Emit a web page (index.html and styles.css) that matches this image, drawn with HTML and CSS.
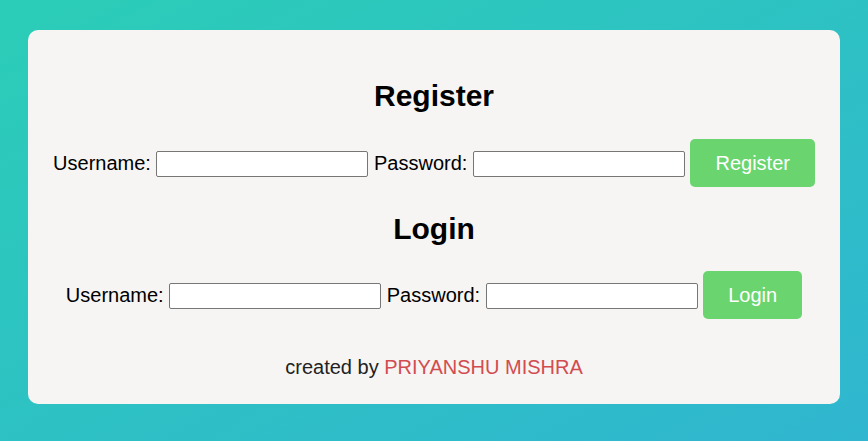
FILE: index.html
```html
<!DOCTYPE html>
<html lang="en">
<head>
<meta charset="utf-8">
<title>Register / Login</title>
<link rel="stylesheet" href="styles.css">
</head>
<body>
<main class="card">
  <h2 class="title">Register</h2>
  <form class="row row-register">
    <label class="label">Username:</label>
    <input class="field" type="text">
    <label class="label">Password:</label>
    <input class="field" type="password">
    <button class="btn btn-register" type="button">Register</button>
  </form>
  <h2 class="title title-login">Login</h2>
  <form class="row row-login">
    <label class="label">Username:</label>
    <input class="field" type="text">
    <label class="label">Password:</label>
    <input class="field" type="password">
    <button class="btn btn-login" type="button">Login</button>
  </form>
  <p class="footer">created by <span class="author">PRIYANSHU MISHRA</span></p>
</main>
</body>
</html>
```

FILE: styles.css
```css
html, body {
  margin: 0;
  height: 100%;
}
body {
  box-sizing: border-box;
  padding: 30px 28px;
  background: linear-gradient(to right bottom, #2bcdb7, #30b6d0);
  font-family: "Liberation Sans", Arial, sans-serif;
  font-size: 20px;
  color: #000;
}
.card {
  background: #f6f5f3;
  border-radius: 10px;
  padding: 49px 0 25px;
  display: flex;
  flex-direction: column;
  align-items: center;
}
.title {
  margin: 0 0 26px;
  font-size: 30px;
  line-height: 34px;
  font-weight: bold;
}
.title-login {
  margin-bottom: 25px;
}
.row {
  margin: 0;
  display: flex;
  align-items: center;
  gap: 5.56px;
  height: 48px;
}
.row-register {
  margin-bottom: 25px;
}
.row-login {
  margin-bottom: 37px;
}
.label {
  line-height: 23px;
  padding-top: 1px;
}
.field {
  box-sizing: border-box;
  width: 212px;
  height: 26px;
  border: 1px solid #767676;
  border-radius: 2px;
  background: #fff;
  padding: 1px 2px;
  margin: 1px 0 0;
}
.btn {
  box-sizing: border-box;
  height: 48px;
  border: none;
  border-radius: 5px;
  background: #6ad56f;
  color: #fff;
  font-family: "Liberation Sans", Arial, sans-serif;
  font-size: 20px;
  padding: 0 25px;
  margin: 0;
}
.footer {
  margin: 0;
  line-height: 23px;
  color: #222;
}
.author {
  color: #d24c4f;
}
```
